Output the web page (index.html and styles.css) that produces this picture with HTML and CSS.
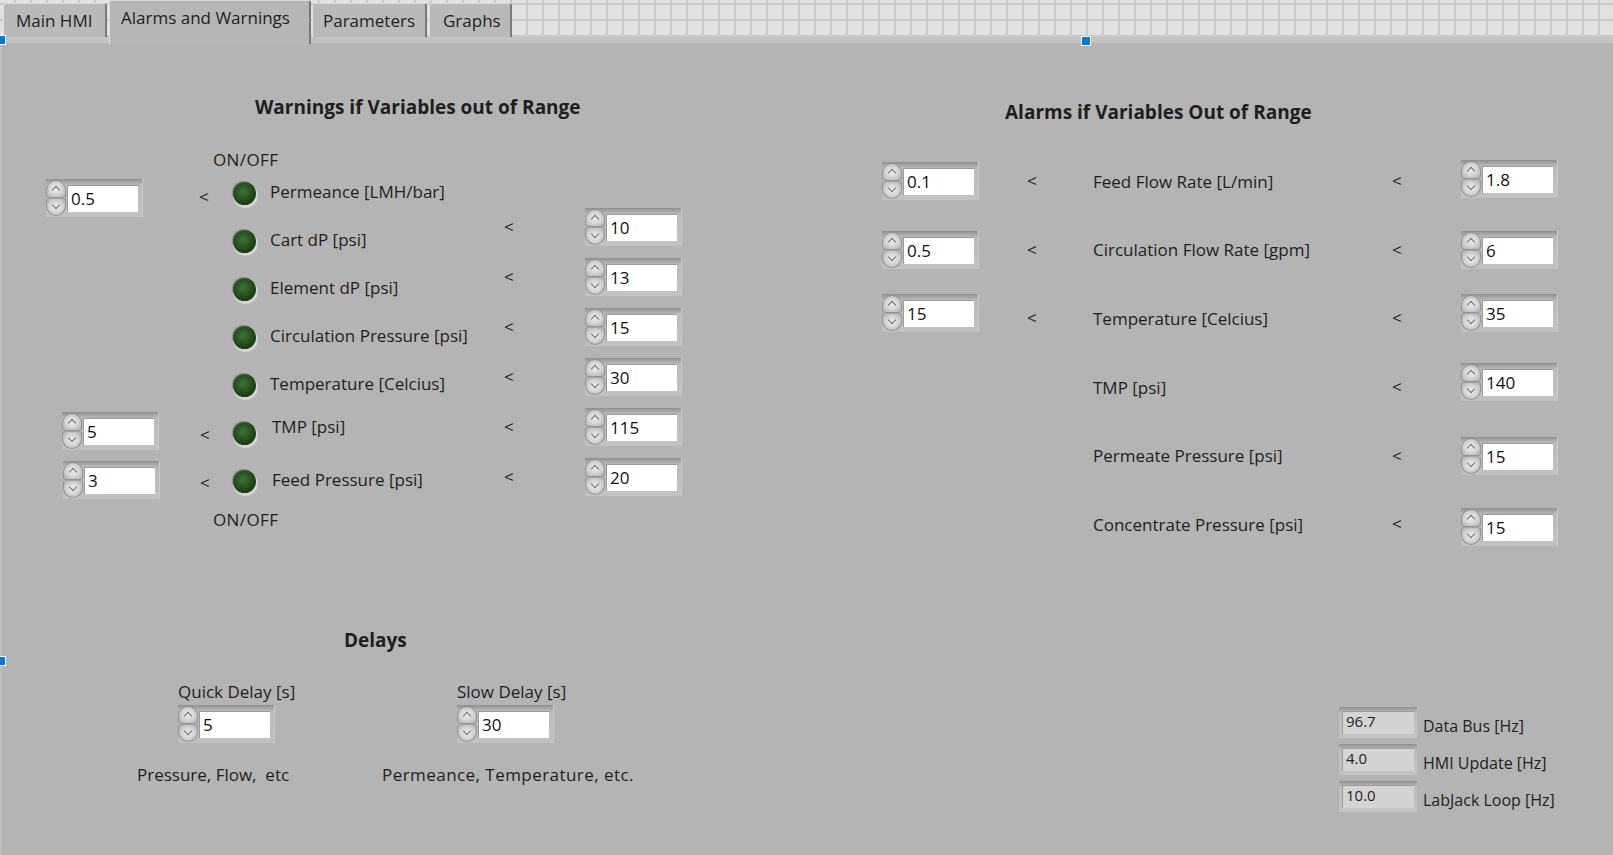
FILE: index.html
```html
<!DOCTYPE html>
<html>
<head>
<meta charset="utf-8">
<title>Alarms and Warnings</title>
<link rel="stylesheet" href="styles.css">
</head>
<body>
<div class="app">
  <div class="tabbar">
    <div class="tab tab-main">Main HMI</div>
    <div class="tab active">Alarms and Warnings</div>
    <div class="tab tab-params">Parameters</div>
    <div class="tab tab-graphs">Graphs</div>
  </div>

  <div class="panel">
    <div class="upper">
      <section class="warnings">
        <h2>Warnings if Variables out of Range</h2>
        <div class="onoff top">ON/OFF</div>
        <div class="wgrid">
          <div class="wright">
            <div class="wrow"><span class="lt wlt">&lt;</span><div class="num"><span class="spin"><i></i><i></i></span><span class="val">10</span></div></div>
            <div class="wrow"><span class="lt wlt">&lt;</span><div class="num"><span class="spin"><i></i><i></i></span><span class="val">13</span></div></div>
            <div class="wrow"><span class="lt wlt">&lt;</span><div class="num"><span class="spin"><i></i><i></i></span><span class="val">15</span></div></div>
            <div class="wrow"><span class="lt wlt">&lt;</span><div class="num"><span class="spin"><i></i><i></i></span><span class="val">30</span></div></div>
            <div class="wrow"><span class="lt wlt">&lt;</span><div class="num"><span class="spin"><i></i><i></i></span><span class="val">115</span></div></div>
            <div class="wrow"><span class="lt wlt">&lt;</span><div class="num"><span class="spin"><i></i><i></i></span><span class="val">20</span></div></div>
          </div>

          <div class="num lnum first"><span class="spin"><i></i><i></i></span><span class="val">0.5</span></div>
          <span class="lt llt first-lt">&lt;</span>
          <span class="led"></span>
          <span class="lbl">Permeance [LMH/bar]</span>

          <span></span><span></span>
          <span class="led"></span>
          <span class="lbl">Cart dP [psi]</span>

          <span></span><span></span>
          <span class="led"></span>
          <span class="lbl">Element dP [psi]</span>

          <span></span><span></span>
          <span class="led"></span>
          <span class="lbl">Circulation Pressure [psi]</span>

          <span></span><span></span>
          <span class="led"></span>
          <span class="lbl">Temperature [Celcius]</span>

          <div class="num lnum second"><span class="spin"><i></i><i></i></span><span class="val">5</span></div>
          <span class="lt llt">&lt;</span>
          <span class="led"></span>
          <span class="lbl lbl-shift lbl-tmp">TMP [psi]</span>

          <div class="num lnum third"><span class="spin"><i></i><i></i></span><span class="val">3</span></div>
          <span class="lt llt">&lt;</span>
          <span class="led"></span>
          <span class="lbl lbl-shift">Feed Pressure [psi]</span>
        </div>
        <div class="onoff bottom">ON/OFF</div>
      </section>

      <section class="alarms">
        <h2>Alarms if Variables Out of Range</h2>
        <div class="agrid">
          <div class="num"><span class="spin"><i></i><i></i></span><span class="val">0.1</span></div>
          <span class="lt">&lt;</span>
          <span class="albl">Feed Flow Rate [L/min]</span>
          <span class="lt">&lt;</span>
          <div class="num up2"><span class="spin"><i></i><i></i></span><span class="val">1.8</span></div>

          <div class="num"><span class="spin"><i></i><i></i></span><span class="val">0.5</span></div>
          <span class="lt">&lt;</span>
          <span class="albl">Circulation Flow Rate [gpm]</span>
          <span class="lt">&lt;</span>
          <div class="num"><span class="spin"><i></i><i></i></span><span class="val">6</span></div>

          <div class="num up6"><span class="spin"><i></i><i></i></span><span class="val">15</span></div>
          <span class="lt">&lt;</span>
          <span class="albl">Temperature [Celcius]</span>
          <span class="lt">&lt;</span>
          <div class="num up6"><span class="spin"><i></i><i></i></span><span class="val">35</span></div>

          <span></span><span></span>
          <span class="albl">TMP [psi]</span>
          <span class="lt">&lt;</span>
          <div class="num up6"><span class="spin"><i></i><i></i></span><span class="val">140</span></div>

          <span></span><span></span>
          <span class="albl">Permeate Pressure [psi]</span>
          <span class="lt">&lt;</span>
          <div class="num"><span class="spin"><i></i><i></i></span><span class="val">15</span></div>

          <span></span><span></span>
          <span class="albl">Concentrate Pressure [psi]</span>
          <span class="lt">&lt;</span>
          <div class="num down3"><span class="spin"><i></i><i></i></span><span class="val">15</span></div>
        </div>
      </section>
    </div>

    <div class="lower">
      <section class="delays">
        <h2>Delays</h2>
        <div class="delay-cols">
          <div class="delay quick">
            <div class="dlabel">Quick Delay [s]</div>
            <div class="num"><span class="spin"><i></i><i></i></span><span class="val">5</span></div>
            <div class="dcap">Pressure, Flow,&nbsp; etc</div>
          </div>
          <div class="delay slow">
            <div class="dlabel">Slow Delay [s]</div>
            <div class="num"><span class="spin"><i></i><i></i></span><span class="val">30</span></div>
            <div class="dcap dcap-wide">Permeance, Temperature, etc.</div>
          </div>
        </div>
      </section>

      <section class="rates">
        <div class="rate"><div class="ind"><span class="ival">96.7</span></div><span class="rlbl">Data Bus [Hz]</span></div>
        <div class="rate"><div class="ind"><span class="ival">4.0</span></div><span class="rlbl">HMI Update [Hz]</span></div>
        <div class="rate"><div class="ind"><span class="ival">10.0</span></div><span class="rlbl">LabJack Loop [Hz]</span></div>
      </section>
    </div>
  </div>

  <span class="handle handle-top"></span>
  <span class="handle handle-left1"></span>
  <span class="handle handle-left2"></span>
</div>
</body>
</html>
```

FILE: styles.css
```css
* { box-sizing: border-box; }
html, body { margin: 0; padding: 0; }
body {
  width: 1613px;
  height: 855px;
  overflow: hidden;
  background: #b4b4b4;
  font-family: "Open Sans", "Noto Sans", sans-serif;
  font-size: 17px;
  color: #1e1e1e;
}
.app { position: relative; width: 1613px; height: 855px; overflow: hidden; }

/* ---------- tab bar ---------- */
.tabbar {
  display: flex;
  height: 37px;
  padding-left: 3px;
  background-color: #e1e1e1;
  background-image:
    linear-gradient(to bottom, #c9c9c9 2px, transparent 2px),
    linear-gradient(to right, #c9c9c9 2px, transparent 2px);
  background-size: 16px 16px;
  background-position: 0 3px, 14px 0;
}
.tab {
  height: 34px;
  margin-top: 3px;
  margin-right: 2px;
  padding-left: 12px;
  line-height: 33px;
  white-space: nowrap;
  background: #b9b9b9;
  border-top: 1px solid #d8d8d8;
  border-left: 1px solid #e2e2e2;
  border-right: 2px solid #7a7a7a;
  border-radius: 3px 3px 0 0;
  color: #1e1e1e;
}
.tab-main { width: 104px; }
.tab.active {
  width: 202px;
  height: 44px;
  margin-top: 0;
  margin-right: 1px;
  padding-left: 11px;
  line-height: 33px;
  background: #b6b6b6;
  position: relative;
  z-index: 2;
}
.tab-params { width: 115px; padding-left: 10px; }
.tab-graphs { width: 83px; padding-left: 13px; }

/* ---------- panel ---------- */
.panel {
  height: 818px;
  border-top: 6px solid #c3c3c3;
  box-shadow: inset 2px 0 #bebebe;
}
h2 {
  margin: 0;
  font-size: 19px;
  font-weight: 700;
  line-height: 24px;
  white-space: nowrap;
}
.upper { display: flex; align-items: flex-start; height: 585px; }

/* warnings */
.warnings { width: 637px; margin-left: 45px; margin-top: 52px; flex: none; }
.warnings h2 { margin-left: 210px; }
.onoff { height: 18px; line-height: 18px; margin-left: 168px; letter-spacing: 0.4px; }
.onoff.top { margin-top: 32px; }
.onoff.bottom { margin-top: 6px; }
.wgrid {
  display: grid;
  grid-template-columns: 140px 40px 45px 233px 179px;
  grid-template-rows: repeat(7, 48px);
  align-items: center;
}
.wright {
  grid-column: 5;
  grid-row: 1 / 8;
  align-self: start;
  display: flex;
  flex-direction: column;
  gap: 12px;
  padding-top: 39px;
}
.wrow { display: flex; align-items: center; }
.lt { line-height: 20px; }
.wlt { width: 82px; padding-left: 1px; }
.llt { margin-left: 15px; margin-top: 4px; }
.first-lt { margin-left: 14px; margin-top: 8px; }
.lnum.first { margin-left: 1px; margin-top: 10px; }
.lnum.second { margin-left: 17px; margin-top: -4px; }
.lnum.third { margin-left: 18px; margin-top: -3px; }
.lbl { white-space: nowrap; margin-bottom: 4px; }
.lbl-shift { margin-left: 2px; }
.lbl-tmp { margin-bottom: 14px; }

/* LED */
.led {
  display: block;
  width: 23px;
  height: 23px;
  margin-left: 8px;
  border-radius: 50%;
  background: radial-gradient(circle at 45% 40%, #44723a 0, #2a5220 40%, #1a3912 75%, #122a0c 100%);
  box-shadow: 1px 2px 1px 1px #d6d6d6, -1px -1px 1px 0 #8c8c8c;
}

/* numeric control */
.num {
  display: flex;
  flex: none;
  width: 97px;
  height: 38px;
  background: linear-gradient(to bottom, #8e8e8e 0, #a6a6a6 3px, #bababa 6px, #c2c2c2 100%);
  border-right: 1px solid #cacaca;
}
.spin {
  width: 20px;
  display: flex;
  flex-direction: column;
  padding: 1px 0;
}
.spin i {
  flex: 1;
  position: relative;
  background: radial-gradient(ellipse at 50% 50%, #ececec 0, #d8d8d8 45%, #ababab 100%);
  border: 1px solid #939393;
}
.spin i:first-child { border-radius: 10px 10px 3px 3px; }
.spin i:last-child { border-radius: 3px 3px 10px 10px; border-top-color: #a4a4a4; }
.spin i::before {
  content: "";
  position: absolute;
  left: 6px;
  top: 6px;
  width: 5px;
  height: 5px;
  border-left: 1.5px solid #707070;
  border-top: 1.5px solid #707070;
  transform: rotate(45deg);
}
.spin i:last-child::before { transform: rotate(225deg); top: 3px; }
.val {
  display: block;
  width: 71px;
  height: 27px;
  margin: 6px 4px 5px 1px;
  padding-left: 4px;
  background: #fff;
  line-height: 27px;
  color: #111;
  box-shadow: inset 1px 1px 0 #9a9a9a;
}

/* alarms */
.alarms { margin-left: 200px; margin-top: 57px; flex: none; }
.alarms h2 { margin-left: 123px; }
.agrid {
  display: grid;
  margin-top: 23px;
  grid-template-columns: 145px 66px 299px 69px 100px;
  grid-template-rows: repeat(6, 68.6px);
  align-items: center;
}
.albl { white-space: nowrap; }
.up2 { margin-bottom: 4px; }
.up6 { margin-bottom: 11px; }
.down3 { margin-top: 6px; }

/* lower */
.lower { display: flex; align-items: flex-start; }
.delays { width: 700px; margin-left: 137px; flex: none; }
.delays h2 { margin-left: 207px; }
.delay-cols { display: flex; margin-top: 28px; }
.delay { display: flex; flex-direction: column; align-items: flex-start; }
.delay.quick { width: 245px; }
.quick .dlabel, .quick .num { margin-left: 41px; }
.slow .dlabel, .slow .num { margin-left: 75px; }
.dlabel { line-height: 24px; white-space: nowrap; }
.delay .num { margin-top: 1px; }
.dcap { line-height: 24px; margin-top: 20px; white-space: nowrap; }
.dcap-wide { letter-spacing: 0.45px; }

.rates {
  margin-left: 502px;
  margin-top: 79px;
  display: flex;
  flex-direction: column;
  gap: 6px;
}
.rate { display: flex; align-items: center; }
.ind {
  width: 78px;
  height: 31px;
  padding: 4px 3px 4px 3px;
  background: linear-gradient(to bottom, #8e8e8e 0, #a8a8a8 3px, #bdbdbd 6px, #c4c4c4 100%);
}
.ival {
  display: block;
  height: 23px;
  padding-left: 4px;
  background: #d4d4d4;
  box-shadow: inset 1px 1px 0 #9c9c9c;
  font-size: 15px;
  line-height: 21px;
  color: #1e1e1e;
}
.rlbl { font-size: 16px; margin-left: 6px; padding-top: 7px; white-space: nowrap; }

/* selection handles (overlay) */
.handle {
  position: absolute;
  width: 10px;
  height: 10px;
  background: #0a78d7;
  border: 1px solid #ffffff;
  z-index: 5;
}
.handle-top { left: 1081px; top: 36px; }
.handle-left1 { left: -4px; top: 35px; }
.handle-left2 { left: -4px; top: 656px; }
```
